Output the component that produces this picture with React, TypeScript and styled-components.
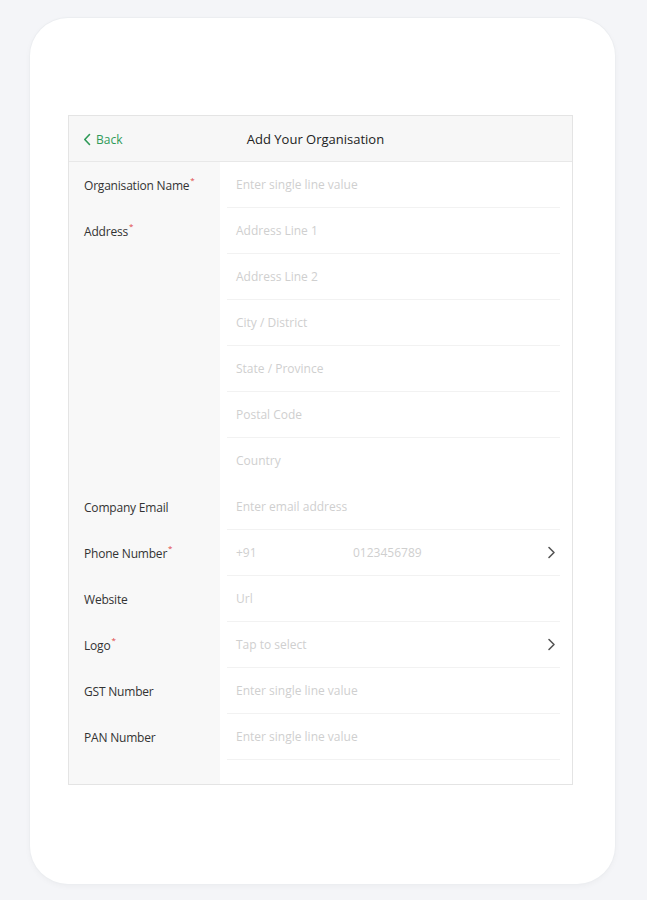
import React from 'react'
import styled, { createGlobalStyle } from 'styled-components'

const GlobalStyle = createGlobalStyle`
  html, body {
    margin: 0;
    padding: 0;
    background: #f4f5f8;
    font-family: "Open Sans", Lato, "Liberation Sans", sans-serif;
  }
`

const Page = styled.div`
  padding: 18px 32px 16px 30px;
`

const Device = styled.div`
  width: 585px;
  height: 866px;
  box-sizing: border-box;
  background: #ffffff;
  border-radius: 38px;
  box-shadow: 0 0 0 1px #eceef1, 0 2px 6px rgba(0, 0, 0, 0.04);
  padding: 97px 42px 0 38px;
`

const Screen = styled.div`
  height: 670px;
  box-sizing: border-box;
  border: 1px solid #e4e4e4;
  overflow: hidden;
  display: flex;
  flex-direction: column;
`

const Header = styled.div`
  flex: none;
  height: 45px;
  background: #f7f7f7;
  border-bottom: 1px solid #e8e8e8;
  display: grid;
  grid-template-columns: 1fr auto 1fr;
  align-items: center;
  padding: 0 14px;
`

const BackButton = styled.div`
  display: flex;
  align-items: center;
  gap: 5px;
  color: #2f9a58;
  font-size: 12px;
  padding-top: 2px;
`

const Title = styled.div`
  font-size: 13px;
  color: #222;
  margin-right: 10px;
`

const Form = styled.div`
  flex: 1;
  display: grid;
  grid-template-columns: 151px 1fr;
  grid-auto-rows: 46px;
  background: linear-gradient(to right, #f8f8f8 151px, #ffffff 151px);
`

const LabelCell = styled.div<{ $span?: number }>`
  grid-column: 1;
  grid-row: span ${(p) => p.$span ?? 1};
  height: 46px;
  display: flex;
  align-items: center;
  padding-left: 15px;
  font-size: 12px;
  letter-spacing: -0.2px;
  color: #333;
  align-self: start;
`

const Required = styled.span`
  color: #e04545;
  font-size: 8px;
  margin-left: 1px;
  align-self: flex-start;
  margin-top: 14px;
  line-height: 1;
`

const ValueCell = styled.div<{ $last?: boolean }>`
  grid-column: 2;
  box-sizing: border-box;
  margin: 0 12px 0 7px;
  padding: 0 4px 0 9px;
  border-bottom: 1px solid ${(p) => (p.$last ? 'transparent' : '#f2f2f2')};
  display: flex;
  align-items: center;
  font-size: 12px;
  color: #cfcfcf;
`

const Code = styled.span`
  width: 117px;
`

const Grow = styled.span`
  flex: 1;
`

const Chevron = () => (
  <svg width="9" height="13" viewBox="0 0 9 13">
    <path d="M2 1.5 L7 6.5 L2 11.5" fill="none" stroke="#555" strokeWidth="1.6" strokeLinecap="round" strokeLinejoin="round" />
  </svg>
)

const BackChevron = () => (
  <svg width="8" height="13" viewBox="0 0 8 13">
    <path d="M6.5 1.5 L1.8 6.5 L6.5 11.5" fill="none" stroke="#2f9a58" strokeWidth="1.6" strokeLinecap="round" strokeLinejoin="round" />
  </svg>
)

const addressLines = ['Address Line 1', 'Address Line 2', 'City / District', 'State / Province', 'Postal Code', 'Country']

const Label = ({ text, required, span }: { text: string; required?: boolean; span?: number }) => (
  <LabelCell $span={span}>
    {text}
    {required && <Required>*</Required>}
  </LabelCell>
)

const App = () => {
  return (
    <>
      <GlobalStyle />
      <Page>
        <Device>
          <Screen>
            <Header>
              <BackButton>
                <BackChevron />
                Back
              </BackButton>
              <Title>Add Your Organisation</Title>
              <span />
            </Header>
            <Form>
              <Label text="Organisation Name" required />
              <ValueCell>Enter single line value</ValueCell>

              <Label text="Address" required span={addressLines.length} />
              {addressLines.map((line, i) => (
                <ValueCell key={line} $last={i === addressLines.length - 1}>{line}</ValueCell>
              ))}

              <Label text="Company Email" />
              <ValueCell>Enter email address</ValueCell>

              <Label text="Phone Number" required />
              <ValueCell>
                <Code>+91</Code>
                <Grow>0123456789</Grow>
                <Chevron />
              </ValueCell>

              <Label text="Website" />
              <ValueCell>Url</ValueCell>

              <Label text="Logo" required />
              <ValueCell>
                <Grow>Tap to select</Grow>
                <Chevron />
              </ValueCell>

              <Label text="GST Number" />
              <ValueCell>Enter single line value</ValueCell>

              <Label text="PAN Number" />
              <ValueCell>Enter single line value</ValueCell>
            </Form>
          </Screen>
        </Device>
      </Page>
    </>
  )
}

export default App
